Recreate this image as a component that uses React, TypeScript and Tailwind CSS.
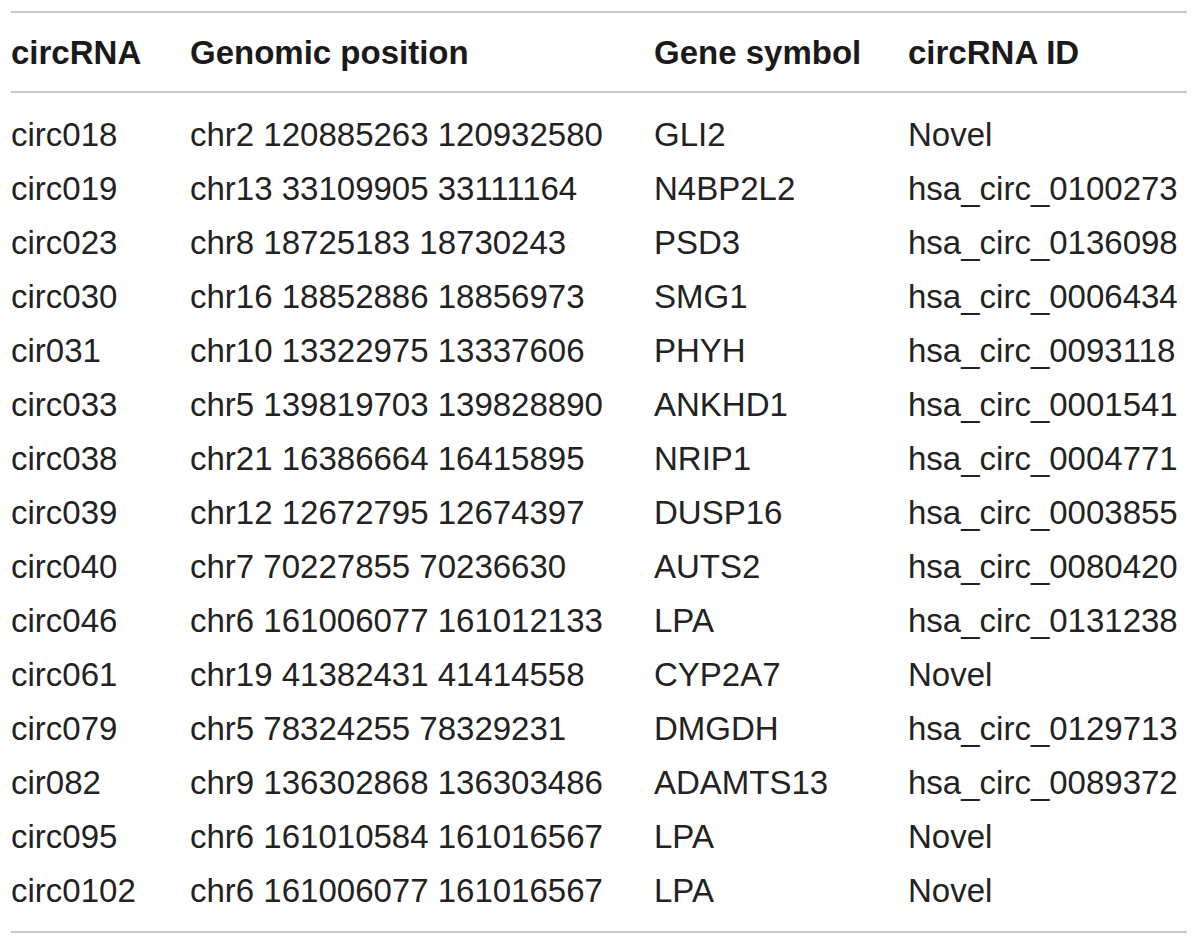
const ROWS: [string, string, string, string][] = [
  ["circ018", "chr2 120885263 120932580", "GLI2", "Novel"],
  ["circ019", "chr13 33109905 33111164", "N4BP2L2", "hsa_circ_0100273"],
  ["circ023", "chr8 18725183 18730243", "PSD3", "hsa_circ_0136098"],
  ["circ030", "chr16 18852886 18856973", "SMG1", "hsa_circ_0006434"],
  ["cir031", "chr10 13322975 13337606", "PHYH", "hsa_circ_0093118"],
  ["circ033", "chr5 139819703 139828890", "ANKHD1", "hsa_circ_0001541"],
  ["circ038", "chr21 16386664 16415895", "NRIP1", "hsa_circ_0004771"],
  ["circ039", "chr12 12672795 12674397", "DUSP16", "hsa_circ_0003855"],
  ["circ040", "chr7 70227855 70236630", "AUTS2", "hsa_circ_0080420"],
  ["circ046", "chr6 161006077 161012133", "LPA", "hsa_circ_0131238"],
  ["circ061", "chr19 41382431 41414558", "CYP2A7", "Novel"],
  ["circ079", "chr5 78324255 78329231", "DMGDH", "hsa_circ_0129713"],
  ["cir082", "chr9 136302868 136303486", "ADAMTS13", "hsa_circ_0089372"],
  ["circ095", "chr6 161010584 161016567", "LPA", "Novel"],
  ["circ0102", "chr6 161006077 161016567", "LPA", "Novel"],
];

const HEADERS = ["circRNA", "Genomic position", "Gene symbol", "circRNA ID"];

// colonnes alignées sur la capture
const COLS = "grid grid-cols-[179px_464px_254px_1fr]";

export default function App() {
  return (
    <div className="min-h-[945px] bg-white pt-[11px] pl-[11px] font-['Liberation_Sans',Arial,sans-serif] text-[33px] text-[#222222]">
      <div className="w-[1176px] border-t-2 border-b-2 border-[#c9c9c9]">
        {/* En-tête */}
        <div className={`${COLS} h-[80px] items-center border-b-2 border-[#c9c9c9] font-bold text-[#1a1a1a]`}>
          {HEADERS.map((h) => (
            <div key={h} className="leading-none">
              {h}
            </div>
          ))}
        </div>

        {/* Lignes */}
        <div className="pt-[15px] pb-[13px]">
          {ROWS.map((row) => (
            <div key={row[0] + row[1]} className={`${COLS} h-[54px] items-center leading-[54px]`}>
              {row.map((cell, i) => (
                <div key={i} className="whitespace-nowrap">
                  {cell}
                </div>
              ))}
            </div>
          ))}
        </div>
      </div>
    </div>
  );
}
